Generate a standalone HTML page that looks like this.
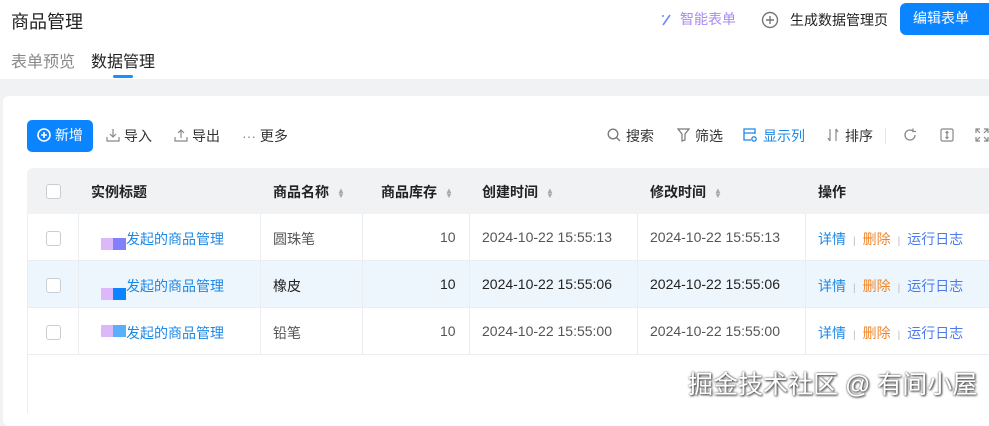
<!DOCTYPE html>
<html><head><meta charset="utf-8"><style>
*{margin:0;padding:0;box-sizing:border-box}
body{width:989px;height:413px;overflow:hidden;background:#f1f2f4;font-family:"Liberation Sans","Noto Sans CJK SC",sans-serif;position:relative;font-size:14px;color:#333}
.a{position:absolute;white-space:nowrap}
.top{position:absolute;left:0;top:0;width:989px;height:79px;background:#fff}
.card{position:absolute;left:3px;top:96px;width:990px;height:330px;background:#fff;border-radius:6px}
.th{position:absolute;top:168px;left:27px;width:970px;height:46px;background:#f1f2f4;border-radius:6px 0 0 0}
.row{position:absolute;left:27px;width:970px;height:47px;border-bottom:1px solid #ebedf0}
.vl{position:absolute;width:1px;background:#ebedf0}
.cb{position:absolute;width:15px;height:15px;border:1px solid #c9cdd4;border-radius:3px;background:#fff;left:46px}
.h{font-weight:bold;color:#222;font-size:14px}
.sort{display:inline-block;margin-left:8px;color:#aaa;font-size:8px;line-height:5px;vertical-align:middle}
.lk{color:#1e88e5}
.sep{color:#bbb;font-size:10px;margin:0 7px}
.del{color:#f0862a}
.log{color:#4b7bec}
.tb{color:#333;font-size:14px}
</style></head><body>
<div class="top"></div>
<div class="a" style="left:11px;top:8px;font-size:18px;color:#222">商品管理</div>
<div class="a" style="left:11px;top:48px;font-size:16px;color:#888">表单预览</div>
<div class="a" style="left:91px;top:48px;font-size:16px;color:#222">数据管理</div>
<div class="a" style="left:113px;top:75px;width:20px;height:3px;border-radius:2px;background:#1890ff"></div>
<svg class="a" style="left:660px;top:12px" width="12" height="14" viewBox="0 0 12 14"><path d="M3 13L10 3" stroke="#6b8cef" stroke-width="1.6"/><circle cx="3" cy="4" r="1" fill="#6b8cef"/></svg>
<div class="a" style="left:680px;top:9px;font-size:14px;color:#a98bf0">智能表单</div>
<svg class="a" style="left:761px;top:11px" width="18" height="18" viewBox="0 0 18 18"><circle cx="9" cy="9" r="7.5" fill="none" stroke="#777" stroke-width="1.4"/><path d="M9 5v8M5 9h8" stroke="#777" stroke-width="1.4"/></svg>
<div class="a" style="left:790px;top:10px;font-size:14px;color:#222">生成数据管理页</div>
<div class="a" style="left:900px;top:3px;width:95px;height:32px;background:#0a84ff;border-radius:6px;color:#fff;font-size:14px;line-height:31px;padding-left:13px">编辑表单</div>
<div class="card"></div>
<div class="a" style="left:27px;top:120px;width:66px;height:32px;background:#0a84ff;border-radius:5px;color:#fff;font-size:14px;line-height:31px;padding-left:10px"><svg style="vertical-align:-2px" width="14" height="14" viewBox="0 0 14 14"><circle cx="7" cy="7" r="6" fill="none" stroke="#fff" stroke-width="1.6"/><path d="M7 4v6M4 7h6" stroke="#fff" stroke-width="1.6"/></svg> 新增</div>
<svg class="a" style="left:106px;top:128px" width="14" height="14" viewBox="0 0 14 14" fill="none" stroke="#888" stroke-width="1.2"><path d="M7 1v8M4 6l3 3 3-3M1 9v4h12V9"/></svg>
<div class="a tb" style="left:124px;top:126px">导入</div>
<svg class="a" style="left:174px;top:128px" width="14" height="14" viewBox="0 0 14 14" fill="none" stroke="#888" stroke-width="1.2"><path d="M7 10V2M4 5l3-3 3 3M1 9v4h12V9"/></svg>
<div class="a tb" style="left:192px;top:126px">导出</div>
<div class="a tb" style="left:242px;top:126px"><span style="color:#888">···</span> 更多</div>
<svg class="a" style="left:607px;top:128px" width="14" height="14" viewBox="0 0 14 14" fill="none" stroke="#777" stroke-width="1.3"><circle cx="6" cy="6" r="4.8"/><path d="M9.5 9.5L13 13"/></svg>
<div class="a tb" style="left:626px;top:126px">搜索</div>
<svg class="a" style="left:677px;top:128px" width="13" height="14" viewBox="0 0 13 14" fill="none" stroke="#777" stroke-width="1.2"><path d="M1 1h11L8 6v6l-3 1V6z"/></svg>
<div class="a tb" style="left:695px;top:126px">筛选</div>
<svg class="a" style="left:743px;top:128px" width="14" height="14" viewBox="0 0 14 14" fill="none" stroke="#1e88e5" stroke-width="1.3"><path d="M8 12H1V1h11v5M1 5h11"/><circle cx="11" cy="11" r="2.2"/></svg>
<div class="a tb" style="left:763px;top:126px;color:#1e88e5">显示列</div>
<svg class="a" style="left:827px;top:128px" width="12" height="14" viewBox="0 0 12 14" fill="none" stroke="#888" stroke-width="1.2"><path d="M3 1v12M1 10l2 3M9 13V1M11 4L9 1"/></svg>
<div class="a tb" style="left:845px;top:126px">排序</div>
<div class="a" style="left:885px;top:128px;width:1px;height:16px;background:#e5e5e5"></div>
<svg class="a" style="left:903px;top:128px" width="14" height="14" viewBox="0 0 14 14" fill="none" stroke="#888" stroke-width="1.3"><path d="M12 7a5 5 0 1 1-2-4M10 0.5v3h3"/></svg>
<svg class="a" style="left:940px;top:128px" width="14" height="14" viewBox="0 0 14 14" fill="none" stroke="#888" stroke-width="1.2"><rect x="1" y="1" width="12" height="12" rx="1.5"/><path d="M7 3.5v7M5.5 5L7 3.5 8.5 5M5.5 9L7 10.5 8.5 9"/></svg>
<svg class="a" style="left:975px;top:128px" width="14" height="14" viewBox="0 0 14 14" fill="none" stroke="#888" stroke-width="1.2"><path d="M1 5V1h4M9 1h4v4M13 9v4H9M5 13H1V9M1 1l4 4M13 1L9 5M13 13l-4-4M1 13l4-4"/></svg>
<div class="th"></div>
<div class="row" style="top:214px;background:#fff"></div>
<div class="row" style="top:261px;background:#eef6fd"></div>
<div class="row" style="top:308px;background:#fff"></div>
<div class="vl" style="left:78px;top:214px;height:141px"></div>
<div class="vl" style="left:260px;top:214px;height:141px"></div>
<div class="vl" style="left:362px;top:214px;height:141px"></div>
<div class="vl" style="left:469px;top:214px;height:141px"></div>
<div class="vl" style="left:637px;top:214px;height:141px"></div>
<div class="vl" style="left:805px;top:214px;height:141px"></div>
<div class="vl" style="left:27px;top:214px;height:199px"></div>
<div class="cb" style="top:184px"></div>
<div class="cb" style="top:231px"></div>
<div class="cb" style="top:278px"></div>
<div class="cb" style="top:325px"></div>
<div class="a h" style="left:91px;top:182px">实例标题</div>
<div class="a h" style="left:273px;top:182px">商品名称<span class="sort">▲<br>▼</span></div>
<div class="a h" style="left:381px;top:182px">商品库存<span class="sort">▲<br>▼</span></div>
<div class="a h" style="left:482px;top:182px">创建时间<span class="sort">▲<br>▼</span></div>
<div class="a h" style="left:650px;top:182px">修改时间<span class="sort">▲<br>▼</span></div>
<div class="a h" style="left:818px;top:182px">操作</div>

<div class="a" style="left:101px;top:238px;width:12px;height:12px;background:#dcb8fa"></div><div class="a" style="left:113px;top:238px;width:13px;height:12px;background:#8080f8"></div>
<div class="a" style="left:101px;top:288px;width:12px;height:12px;background:#dcb8fa"></div><div class="a" style="left:113px;top:288px;width:13px;height:12px;background:#0a84ff"></div>
<div class="a" style="left:101px;top:325px;width:12px;height:12px;background:#dcb8fa"></div><div class="a" style="left:113px;top:325px;width:13px;height:12px;background:#5ab0f8"></div>
<div class="a lk" style="left:126px;top:229px">发起的商品管理</div>
<div class="a lk" style="left:126px;top:276px">发起的商品管理</div>
<div class="a lk" style="left:126px;top:323px">发起的商品管理</div>
<div class="a" style="left:273px;top:229px;color:#555">圆珠笔</div>
<div class="a" style="left:273px;top:276px;color:#222">橡皮</div>
<div class="a" style="left:273px;top:323px;color:#555">铅笔</div>
<div class="a" style="left:440px;top:229px;color:#555">10</div>
<div class="a" style="left:440px;top:276px;color:#222">10</div>
<div class="a" style="left:440px;top:323px;color:#555">10</div>
<div class="a" style="left:482px;top:229px;color:#555">2024-10-22 15:55:13</div>
<div class="a" style="left:482px;top:276px;color:#222">2024-10-22 15:55:06</div>
<div class="a" style="left:482px;top:323px;color:#555">2024-10-22 15:55:00</div>
<div class="a" style="left:650px;top:229px;color:#555">2024-10-22 15:55:13</div>
<div class="a" style="left:650px;top:276px;color:#222">2024-10-22 15:55:06</div>
<div class="a" style="left:650px;top:323px;color:#555">2024-10-22 15:55:00</div>
<div class="a" style="left:818px;top:229px"><span class="lk">详情</span><span class="sep">|</span><span class="del">删除</span><span class="sep">|</span><span class="log">运行日志</span></div>
<div class="a" style="left:818px;top:276px"><span class="lk">详情</span><span class="sep">|</span><span class="del">删除</span><span class="sep">|</span><span class="log">运行日志</span></div>
<div class="a" style="left:818px;top:323px"><span class="lk">详情</span><span class="sep">|</span><span class="del">删除</span><span class="sep">|</span><span class="log">运行日志</span></div>
<div class="a" style="left:688px;top:365px;font-size:25px;color:#fff;text-shadow:0 0 2px #555,1px 1px 2px #333">掘金技术社区 @ 有间小屋</div>
</body></html>
